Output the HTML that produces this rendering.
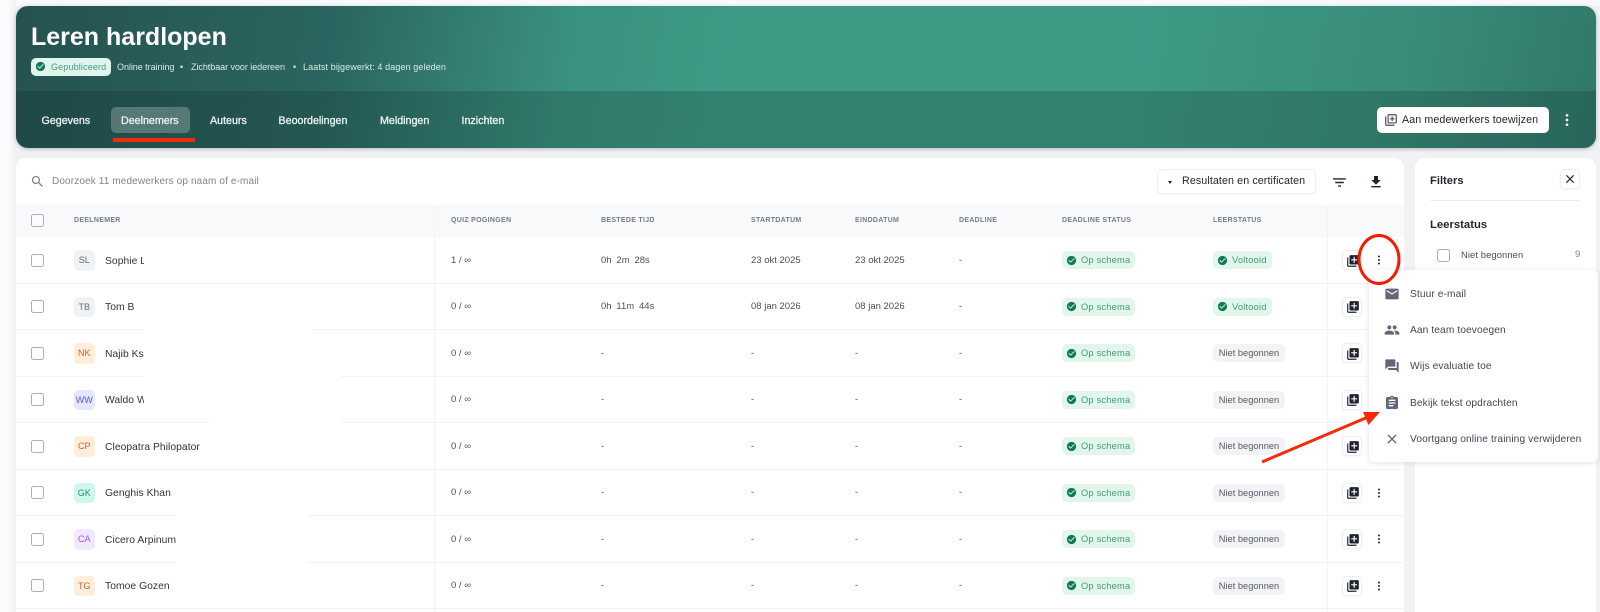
<!DOCTYPE html>
<html lang="nl"><head><meta charset="utf-8"><title>Leren hardlopen</title>
<style>
*{box-sizing:border-box}
html,body{margin:0;padding:0;width:1600px;height:612px;overflow:hidden;background:#f1f2f5}
body{font-family:"Liberation Sans",sans-serif;color:#2b3040}
#w{position:absolute;left:0;top:0;width:1600px;height:612px;overflow:hidden;filter:blur(.3px);background:#f1f2f5}
#w div,#w span.a,#w svg.a{position:absolute}
.t{white-space:nowrap}
#hd{left:16px;top:6px;width:1580px;height:142px;border-radius:12px;overflow:hidden;background:linear-gradient(100deg,#255250 0%,#2b6560 20%,#3a917f 35%,#3e9b86 45%,#3e9b86 70%,#398c79 88%,#30786a 100%);box-shadow:0 1px 4px rgba(0,0,0,.25)}
#nv{left:0;top:85px;width:1580px;height:57px;background:rgba(10,30,30,.2)}
.tab{top:0;color:#eef4f2;font-size:10.7px;-webkit-text-stroke:.3px #eef4f2;line-height:12px}
.m{color:#d9ebe5;font-size:9px;line-height:12px;letter-spacing:-.05px}
#tb{left:16px;top:158px;width:1388px;height:470px;background:#fff;border-radius:10px 10px 0 0;overflow:hidden}
#fp{left:1415px;top:158px;width:181px;height:470px;background:#fff;border-radius:10px 10px 0 0}
#th{left:0;top:47px;width:1388px;height:32px;background:#f8f9fb}
.h{top:58px;font-size:7px;font-weight:bold;color:#767c88;line-height:10px;letter-spacing:.3px}
.r{left:0;width:1388px;height:46.5px;border-bottom:1px solid #f2f3f5}
.cb{left:15px;top:16.5px;width:13px;height:13px;border:1.4px solid #a8aebb;border-radius:2.5px;background:#fff}
.av{left:58px;top:13px;width:20.5px;height:20.5px;border-radius:4.5px;text-align:center;font-size:9px;line-height:20.5px}
.n{left:89px;top:17.5px;font-size:10.3px;line-height:13px;color:#30343f;white-space:nowrap;overflow:hidden;letter-spacing:.05px}
.c{top:17.5px;font-size:9.5px;line-height:12px;color:#4a4f5c;white-space:nowrap}
.g{left:1046px;top:14px;width:73px;height:18px;background:#e2f6ec;border-radius:5px}
.gv{left:1197px;top:14px;width:59px;height:18px;background:#e2f6ec;border-radius:5px}
.gt{color:#3f9d78;font-size:9.3px;line-height:12px;top:3px;white-space:nowrap;letter-spacing:.2px}
.nb{left:1197px;top:14px;width:72px;height:18px;background:#f2f3f5;border-radius:5px;color:#555a64;font-size:9.3px;line-height:18px;text-align:center;white-space:nowrap}
.ab{left:1326px;top:13px;width:20px;height:20px;background:#fff;border:1px solid #edeef0;border-radius:4px;box-shadow:0 1px 2px rgba(0,0,0,.04)}
.ab svg{left:2.5px;top:2.5px;fill:#1e2330}
.g svg,.gv svg{left:4px;top:3.5px;fill:#0f7a55}
.d{left:1357px;top:17px;fill:#1e2330}
.sep{top:47px;width:1px;height:423px;background:#f3f4f6}
.pt{background:#fff;height:3px}
#mn{left:1369px;top:270px;width:229px;height:192px;background:#fff;border-radius:5px;box-shadow:0 1px 6px rgba(30,40,60,.13)}
.mi{left:41px;font-size:10.2px;line-height:13px;color:#424756;white-space:nowrap;letter-spacing:.1px}
</style></head><body>
<svg width="0" height="0" style="position:absolute"><defs>
<symbol id="lib" viewBox="0 0 24 24"><path d="M4 6H2v14c0 1.1.9 2 2 2h14v-2H4V6zm16-4H8c-1.1 0-2 .9-2 2v12c0 1.1.9 2 2 2h12c1.1 0 2-.9 2-2V4c0-1.1-.9-2-2-2zm-1 9h-4v4h-2v-4H9V9h4V5h2v4h4v2z"/></symbol>
<symbol id="lbo" viewBox="0 0 24 24"><path d="M4 6H2v14c0 1.1.9 2 2 2h14v-2H4V6zm16-4H8c-1.1 0-2 .9-2 2v12c0 1.1.9 2 2 2h12c1.1 0 2-.9 2-2V4c0-1.1-.9-2-2-2zm0 14H8V4h12v12zm-7-2h2v-3h3V9h-3V6h-2v3h-3v2h3z"/></symbol>
<symbol id="chk" viewBox="0 0 24 24"><path d="M12 2C6.48 2 2 6.48 2 12s4.48 10 10 10 10-4.48 10-10S17.52 2 12 2zm-2 15l-5-5 1.41-1.41L10 14.17l7.59-7.59L19 8l-9 9z"/></symbol>
<symbol id="dot" viewBox="0 0 24 24"><circle cx="12" cy="5" r="2"/><circle cx="12" cy="12" r="2"/><circle cx="12" cy="19" r="2"/></symbol>
<symbol id="cls" viewBox="0 0 24 24"><path d="M19 6.41L17.59 5 12 10.59 6.41 5 5 6.41 10.59 12 5 17.59 6.41 19 12 13.41 17.59 19 19 17.59 13.41 12z"/></symbol>
</defs></svg>
<div id="w">
<div style="left:0;top:0;width:1600px;height:6px;background:#f8f9fc"></div>
<div style="left:0;top:0;width:16px;height:612px;background:linear-gradient(90deg,#fcfcfe 0%,#fbfbfd 55%,#f0f1f4 100%)"></div>
<div id="hd">
 <div class="t" style="left:15px;top:16px;font-size:25px;font-weight:bold;color:#fff;line-height:30px">Leren hardlopen</div>
 <div style="left:15px;top:51.5px;width:80px;height:18.5px;background:#e0f6ec;border-radius:5px"></div>
 <svg class="a" style="left:18.5px;top:55px;fill:#0f7a55" width="11" height="11"><use href="#chk"/></svg>
 <div class="t" style="left:35px;top:55px;font-size:9px;line-height:12px;color:#3f9d78;letter-spacing:.15px">Gepubliceerd</div>
 <div class="t m" style="left:101px;top:55px">Online training</div>
 <div class="t m" style="left:164px;top:55px">•</div>
 <div class="t m" style="left:175px;top:55px">Zichtbaar voor iedereen</div>
 <div class="t m" style="left:277px;top:55px">•</div>
 <div class="t m" style="left:287px;top:55px;letter-spacing:.1px">Laatst bijgewerkt: 4 dagen geleden</div>
 <div id="nv">
  <div style="left:95px;top:16px;width:79px;height:26px;background:rgba(255,255,255,.24);border-radius:5px"></div>
  <div class="t tab" style="left:25.5px;top:23.7px">Gegevens</div>
  <div class="t tab" style="left:105px;top:23.7px">Deelnemers</div>
  <div class="t tab" style="left:194px;top:23.7px">Auteurs</div>
  <div class="t tab" style="left:262.5px;top:23.7px">Beoordelingen</div>
  <div class="t tab" style="left:364px;top:23.7px">Meldingen</div>
  <div class="t tab" style="left:445.5px;top:23.7px">Inzichten</div>
  <div style="left:97px;top:47px;width:82px;height:3.5px;background:#f02c0a"></div>
  <div style="left:1361px;top:16px;width:172px;height:26px;background:#fff;border-radius:5px"></div>
  <svg class="a" style="left:1368px;top:22px;fill:#4a4f5c" width="14" height="14"><use href="#lbo"/></svg>
  <div class="t" style="left:1386px;top:22.5px;font-size:10.7px;line-height:13px;color:#1e2330;letter-spacing:.1px">Aan medewerkers toewijzen</div>
  <svg class="a" style="left:1543px;top:21px;fill:#fff" width="16" height="16"><use href="#dot"/></svg>
 </div>
</div>

<div id="tb">
 <svg class="a" style="left:14px;top:16px;fill:#7b808c" width="15" height="15" viewBox="0 0 24 24"><path d="M15.5 14h-.79l-.28-.27C15.41 12.59 16 11.11 16 9.5 16 5.91 13.09 3 9.5 3S3 5.91 3 9.5 5.91 16 9.5 16c1.61 0 3.09-.59 4.23-1.57l.27.28v.79l5 4.99L20.49 19l-4.99-5zm-6 0C7.01 14 5 11.99 5 9.5S7.01 5 9.5 5 14 7.01 14 9.5 11.99 14 9.5 14z"/></svg>
 <div class="t" style="left:36px;top:18px;font-size:10px;line-height:12px;color:#80858f;letter-spacing:.13px">Doorzoek 11 medewerkers op naam of e-mail</div>
 <div style="left:1141px;top:11px;width:159px;height:25px;background:#fff;border:1px solid #eeeff1;border-radius:5px;box-shadow:0 1px 2px rgba(0,0,0,.04)"></div>
 <div style="left:1152px;top:22.5px;width:0;height:0;border-left:2.5px solid transparent;border-right:2.5px solid transparent;border-top:3px solid #1e2330"></div>
 <div class="t" style="left:1166px;top:17px;font-size:10.7px;line-height:13px;color:#22262f;letter-spacing:.1px">Resultaten en certificaten</div>
 <svg class="a" style="left:1315px;top:15.5px;fill:#1e2330" width="17" height="17" viewBox="0 0 24 24"><path d="M10 18h4v-2h-4v2zM3 6v2h18V6H3zm3 7h12v-2H6v2z"/></svg>
 <svg class="a" style="left:1352px;top:15.5px;fill:#1e2330" width="16" height="16" viewBox="0 0 24 24"><path d="M19 9h-4V3H9v6H5l7 7 7-7zM5 18v2h14v-2H5z"/></svg>

 <div id="th"></div>
 <div class="cb" style="top:56px;background:#fbfbfc"></div>
 <div class="t h" style="left:58px">DEELNEMER</div>
 <div class="t h" style="left:435px">QUIZ POGINGEN</div>
 <div class="t h" style="left:585px">BESTEDE TIJD</div>
 <div class="t h" style="left:735px">STARTDATUM</div>
 <div class="t h" style="left:839px">EINDDATUM</div>
 <div class="t h" style="left:943px">DEADLINE</div>
 <div class="t h" style="left:1046px">DEADLINE STATUS</div>
 <div class="t h" style="left:1197px">LEERSTATUS</div>

 <div class="r" style="top:79px">
  <div class="cb"></div><div class="av" style="background:#f1f2f4;color:#666b75">SL</div><div class="n" style="width:39px">Sophie L</div>
  <div class="c" style="left:435px">1 / ∞</div><div class="c" style="left:585px;word-spacing:2.2px">0h 2m 28s</div><div class="c" style="left:735px">23 okt 2025</div><div class="c" style="left:839px">23 okt 2025</div><div class="c" style="left:943px">-</div>
  <div class="g"><svg class="a" width="11" height="11"><use href="#chk"/></svg><div class="gt" style="left:19px">Op schema</div></div>
  <div class="gv"><svg class="a" width="11" height="11"><use href="#chk"/></svg><div class="gt" style="left:19px">Voltooid</div></div>
  <div class="ab"><svg class="a" width="14" height="14"><use href="#lib"/></svg></div>
  <svg class="a d" width="12" height="12"><use href="#dot"/></svg>
 </div>
 <div class="r" style="top:125.5px">
  <div class="cb"></div><div class="av" style="background:#f1f2f4;color:#666b75">TB</div><div class="n">Tom B</div>
  <div class="c" style="left:435px">0 / ∞</div><div class="c" style="left:585px;word-spacing:2.2px">0h 11m 44s</div><div class="c" style="left:735px">08 jan 2026</div><div class="c" style="left:839px">08 jan 2026</div><div class="c" style="left:943px">-</div>
  <div class="g"><svg class="a" width="11" height="11"><use href="#chk"/></svg><div class="gt" style="left:19px">Op schema</div></div>
  <div class="gv"><svg class="a" width="11" height="11"><use href="#chk"/></svg><div class="gt" style="left:19px">Voltooid</div></div>
  <div class="ab"><svg class="a" width="14" height="14"><use href="#lib"/></svg></div>
 </div>
 <div class="r" style="top:172px">
  <div class="cb"></div><div class="av" style="background:#feeeda;color:#d2603a">NK</div><div class="n">Najib Ks</div>
  <div class="c" style="left:435px">0 / ∞</div><div class="c" style="left:585px">-</div><div class="c" style="left:735px">-</div><div class="c" style="left:839px">-</div><div class="c" style="left:943px">-</div>
  <div class="g"><svg class="a" width="11" height="11"><use href="#chk"/></svg><div class="gt" style="left:19px">Op schema</div></div>
  <div class="nb">Niet begonnen</div>
  <div class="ab"><svg class="a" width="14" height="14"><use href="#lib"/></svg></div>
 </div>
 <div class="r" style="top:218.5px">
  <div class="cb"></div><div class="av" style="background:#e5e7ff;color:#5b54e6">WW</div><div class="n" style="width:39px">Waldo W</div>
  <div class="c" style="left:435px">0 / ∞</div><div class="c" style="left:585px">-</div><div class="c" style="left:735px">-</div><div class="c" style="left:839px">-</div><div class="c" style="left:943px">-</div>
  <div class="g"><svg class="a" width="11" height="11"><use href="#chk"/></svg><div class="gt" style="left:19px">Op schema</div></div>
  <div class="nb">Niet begonnen</div>
  <div class="ab"><svg class="a" width="14" height="14"><use href="#lib"/></svg></div>
 </div>
 <div class="r" style="top:265px">
  <div class="cb"></div><div class="av" style="background:#feeeda;color:#d2603a">CP</div><div class="n">Cleopatra Philopator</div>
  <div class="c" style="left:435px">0 / ∞</div><div class="c" style="left:585px">-</div><div class="c" style="left:735px">-</div><div class="c" style="left:839px">-</div><div class="c" style="left:943px">-</div>
  <div class="g"><svg class="a" width="11" height="11"><use href="#chk"/></svg><div class="gt" style="left:19px">Op schema</div></div>
  <div class="nb">Niet begonnen</div>
  <div class="ab"><svg class="a" width="14" height="14"><use href="#lib"/></svg></div>
 </div>
 <div class="r" style="top:311.5px">
  <div class="cb"></div><div class="av" style="background:#ccf8ee;color:#2b8a78">GK</div><div class="n">Genghis Khan</div>
  <div class="c" style="left:435px">0 / ∞</div><div class="c" style="left:585px">-</div><div class="c" style="left:735px">-</div><div class="c" style="left:839px">-</div><div class="c" style="left:943px">-</div>
  <div class="g"><svg class="a" width="11" height="11"><use href="#chk"/></svg><div class="gt" style="left:19px">Op schema</div></div>
  <div class="nb">Niet begonnen</div>
  <div class="ab"><svg class="a" width="14" height="14"><use href="#lib"/></svg></div>
  <svg class="a d" width="12" height="12"><use href="#dot"/></svg>
 </div>
 <div class="r" style="top:358px">
  <div class="cb"></div><div class="av" style="background:#f2e8ff;color:#a855f7">CA</div><div class="n" style="width:71px">Cicero Arpinum</div>
  <div class="c" style="left:435px">0 / ∞</div><div class="c" style="left:585px">-</div><div class="c" style="left:735px">-</div><div class="c" style="left:839px">-</div><div class="c" style="left:943px">-</div>
  <div class="g"><svg class="a" width="11" height="11"><use href="#chk"/></svg><div class="gt" style="left:19px">Op schema</div></div>
  <div class="nb">Niet begonnen</div>
  <div class="ab"><svg class="a" width="14" height="14"><use href="#lib"/></svg></div>
  <svg class="a d" width="12" height="12"><use href="#dot"/></svg>
 </div>
 <div class="r" style="top:404.5px">
  <div class="cb"></div><div class="av" style="background:#feeeda;color:#d2603a">TG</div><div class="n">Tomoe Gozen</div>
  <div class="c" style="left:435px">0 / ∞</div><div class="c" style="left:585px">-</div><div class="c" style="left:735px">-</div><div class="c" style="left:839px">-</div><div class="c" style="left:943px">-</div>
  <div class="g"><svg class="a" width="11" height="11"><use href="#chk"/></svg><div class="gt" style="left:19px">Op schema</div></div>
  <div class="nb">Niet begonnen</div>
  <div class="ab"><svg class="a" width="14" height="14"><use href="#lib"/></svg></div>
  <svg class="a d" width="12" height="12"><use href="#dot"/></svg>
 </div>
 <div class="sep" style="left:418px"></div>
 <div class="sep" style="left:1311px"></div>
 <div class="pt" style="left:128px;top:170px;width:169px"></div>
 <div class="pt" style="left:128px;top:216.5px;width:197px"></div>
 <div class="pt" style="left:193px;top:263px;width:132px"></div>
 <div class="pt" style="left:159px;top:356px;width:133px"></div>
 <div class="pt" style="left:159px;top:402.5px;width:133px"></div>
</div>

<div id="fp">
 <div class="t" style="left:15px;top:15.5px;font-size:11.2px;font-weight:bold;line-height:14px;color:#22262f">Filters</div>
 <div style="left:145px;top:11px;width:20px;height:20px;border:1px solid #eeeff1;border-radius:4px;box-shadow:0 1px 2px rgba(0,0,0,.04)"></div>
 <svg class="a" style="left:148px;top:14px;fill:#22262f" width="14" height="14"><use href="#cls"/></svg>
 <div style="left:15px;top:42px;width:150px;height:1px;background:#eceef0"></div>
 <div class="t" style="left:15px;top:61px;font-size:11.3px;font-weight:bold;line-height:13px;color:#22262f">Leerstatus</div>
 <div style="left:22px;top:91px;width:13px;height:13px;border:1.4px solid #a8aebb;border-radius:2.5px"></div>
 <div class="t" style="left:46px;top:91px;font-size:9.4px;line-height:12px;color:#4a4f5c;letter-spacing:.1px">Niet begonnen</div>
 <div class="t" style="left:160px;top:91px;font-size:9.5px;line-height:12px;color:#80858f">9</div>
</div>

<div id="mn">
 <svg class="a" style="left:15px;top:16px;fill:#626776" width="16" height="16" viewBox="0 0 24 24"><path d="M20 4H4c-1.1 0-1.99.9-1.99 2L2 18c0 1.1.9 2 2 2h16c1.1 0 2-.9 2-2V6c0-1.1-.9-2-2-2zm0 4l-8 5-8-5V6l8 5 8-5v2z"/></svg>
 <div class="mi" style="top:17.5px">Stuur e-mail</div>
 <svg class="a" style="left:15px;top:52px;fill:#626776" width="16" height="16" viewBox="0 0 24 24"><path d="M16 11c1.66 0 2.99-1.34 2.99-3S17.66 5 16 5c-1.66 0-3 1.34-3 3s1.34 3 3 3zm-8 0c1.66 0 2.99-1.34 2.99-3S9.66 5 8 5C6.34 5 5 6.34 5 8s1.34 3 3 3zm0 2c-2.33 0-7 1.17-7 3.5V19h14v-2.5c0-2.33-4.67-3.5-7-3.5zm8 0c-.29 0-.62.02-.97.05 1.16.84 1.97 1.97 1.97 3.45V19h6v-2.5c0-2.33-4.67-3.5-7-3.5z"/></svg>
 <div class="mi" style="top:54px">Aan team toevoegen</div>
 <svg class="a" style="left:15px;top:88px;fill:#626776" width="16" height="16" viewBox="0 0 24 24"><path d="M21 6h-2v9H6v2c0 .55.45 1 1 1h11l4 4V7c0-.55-.45-1-1-1zm-4 6V3c0-.55-.45-1-1-1H3c-.55 0-1 .45-1 1v14l4-4h10c.55 0 1-.45 1-1z"/></svg>
 <div class="mi" style="top:90px">Wijs evaluatie toe</div>
 <svg class="a" style="left:15px;top:125px;fill:#626776" width="16" height="16" viewBox="0 0 24 24"><path d="M19 3h-4.18C14.4 1.84 13.3 1 12 1c-1.3 0-2.4.84-2.82 2H5c-1.1 0-2 .9-2 2v14c0 1.1.9 2 2 2h14c1.1 0 2-.9 2-2V5c0-1.1-.9-2-2-2zm-7 0c.55 0 1 .45 1 1s-.45 1-1 1-1-.45-1-1 .45-1 1-1zm2 14H7v-2h7v2zm3-4H7v-2h10v2zm0-4H7V7h10v2z"/></svg>
 <div class="mi" style="top:126.5px">Bekijk tekst opdrachten</div>
 <svg class="a" style="left:15px;top:161px;fill:#626776" width="16" height="16"><use href="#cls"/></svg>
 <div class="mi" style="top:163px">Voortgang online training verwijderen</div>
</div>

<svg class="a" style="left:0;top:0;pointer-events:none" width="1600" height="612">
 <ellipse cx="1379" cy="259.5" rx="20" ry="24" fill="none" stroke="#f51a00" stroke-width="3"/>
 <path d="M1262 462L1368 417" stroke="#f52a0a" stroke-width="3" fill="none"/>
 <path d="M1380 412L1363 412L1368.5 425Z" fill="#f52a0a"/>
</svg>
</div>
</body></html>
